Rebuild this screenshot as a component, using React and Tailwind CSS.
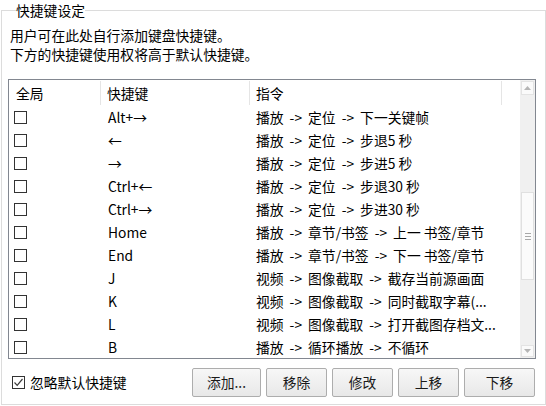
const rows = [
  { key: 'Alt+→', cmd: '播放 -> 定位 -> 下一关键帧' },
  { key: '←', cmd: '播放 -> 定位 -> 步退5 秒' },
  { key: '→', cmd: '播放 -> 定位 -> 步进5 秒' },
  { key: 'Ctrl+←', cmd: '播放 -> 定位 -> 步退30 秒' },
  { key: 'Ctrl+→', cmd: '播放 -> 定位 -> 步进30 秒' },
  { key: 'Home', cmd: '播放 -> 章节/书签 -> 上一 书签/章节' },
  { key: 'End', cmd: '播放 -> 章节/书签 -> 下一 书签/章节' },
  { key: 'J', cmd: '视频 -> 图像截取 -> 截存当前源画面' },
  { key: 'K', cmd: '视频 -> 图像截取 -> 同时截取字幕(...' },
  { key: 'L', cmd: '视频 -> 图像截取 -> 打开截图存档文...' },
  { key: 'B', cmd: '播放 -> 循环播放 -> 不循环' },
];

const buttons = [
  { label: '添加...', w: 'w-[69px]' },
  { label: '移除', w: 'w-[61px]' },
  { label: '修改', w: 'w-[61px]' },
  { label: '上移', w: 'w-[61px]' },
  { label: '下移', w: 'w-[71px]' },
];

function Box({ checked }) {
  return (
    <span className="flex w-[13px] h-[13px] border border-[#333] bg-white items-center justify-center shrink-0">
      {checked && (
        <svg width="11" height="11" viewBox="0 0 11 11">
          <path d="M1.5 5.5 L4.2 8.3 L9.5 2" fill="none" stroke="#3c3c3c" strokeWidth="1.2" />
        </svg>
      )}
    </span>
  );
}

// YaHei draws " -> " much wider than the CJK font here, so the arrow gets its own spacing
function Command({ text }) {
  const parts = text.split(' -> ');
  return (
    <span className="whitespace-nowrap">
      {parts.map((p, i) => (
        <span key={i}>
          {i > 0 && <span className="px-[6px]">-&gt;</span>}
          {p}
        </span>
      ))}
    </span>
  );
}

function ScrollBar() {
  return (
    <div className="w-[15px] bg-[#f0f0f0] flex flex-col items-center py-px">
      <div className="w-[13px] h-[14px] bg-[#fafafa] border border-[#e3e3e3] flex items-center justify-center">
        <svg width="7" height="4" viewBox="0 0 7 4"><path d="M0 4 L3.5 0 L7 4 Z" fill="#b5b5b5" /></svg>
      </div>
      <div className="mt-[97px] w-[13px] h-[88px] bg-[#fbfbfb] border border-[#e0e0e0] flex flex-col items-center justify-center gap-[2px]">
        <div className="w-[6px] h-px bg-[#a8a8a8]" />
        <div className="w-[6px] h-px bg-[#a8a8a8]" />
        <div className="w-[6px] h-px bg-[#a8a8a8]" />
      </div>
      <div className="flex-1" />
      <div className="w-[13px] h-[12px] bg-[#fafafa] border border-[#e3e3e3] flex items-center justify-center">
        <svg width="7" height="4" viewBox="0 0 7 4"><path d="M0 0 L3.5 4 L7 0 Z" fill="#b5b5b5" /></svg>
      </div>
    </div>
  );
}

export default function App() {
  return (
    <div
      className="w-[546px] h-[406px] bg-white text-black text-[13.8px] overflow-hidden"
      style={{ fontFamily: '"Noto Sans CJK SC", "Noto Sans", sans-serif' }}
    >
      <fieldset className="ml-px w-[545px] h-[405px] border border-[#dcdcdc] pl-[6px] pr-0">
        <legend className="ml-[8px] leading-[20px]">快捷键设定</legend>
        <div className="pl-[2px] mt-[6px] leading-[19px]">
          <p>用户可在此处自行添加键盘快捷键。</p>
          <p>下方的快捷键使用权将高于默认快捷键。</p>
        </div>

        <div className="mt-[15px] w-[528px] h-[280px] border border-[#828790] flex overflow-hidden">
          <div className="flex-1 flex flex-col">
            <div className="flex h-[26px] items-center shrink-0">
              <div className="w-[92px] pl-[7px] h-[24px] flex items-center border-r border-[#e5e5e5]">全局</div>
              <div className="w-[149px] pl-[6px] h-[24px] flex items-center border-r border-[#e5e5e5]">快捷键</div>
              <div className="w-[252px] pl-[6px] h-[24px] flex items-center border-r border-[#e5e5e5]">指令</div>
            </div>
            {rows.map(r => (
              <div key={r.key} className="flex h-[23px] items-center shrink-0">
                <div className="w-[92px] pl-[5px]"><Box /></div>
                <div className="w-[149px] pl-[7px]">{r.key}</div>
                <div className="w-[252px] pl-[6px]"><Command text={r.cmd} /></div>
              </div>
            ))}
          </div>
          <ScrollBar />
        </div>

        <div className="mt-[9px] w-[528px] flex items-center">
          <label className="flex items-center gap-[5px] pl-[4px]">
            <Box checked />
            <span>忽略默认快捷键</span>
          </label>
          <div className="ml-auto flex gap-[5px] pr-px">
            {buttons.map(b => (
              <button
                key={b.label}
                className={`${b.w} h-[29px] border border-[#adadad] rounded-[2px] bg-gradient-to-b from-[#f7f7f7] to-[#e8e8e8] text-[#1a1a1a]`}
              >
                {b.label}
              </button>
            ))}
          </div>
        </div>
      </fieldset>
    </div>
  );
}
